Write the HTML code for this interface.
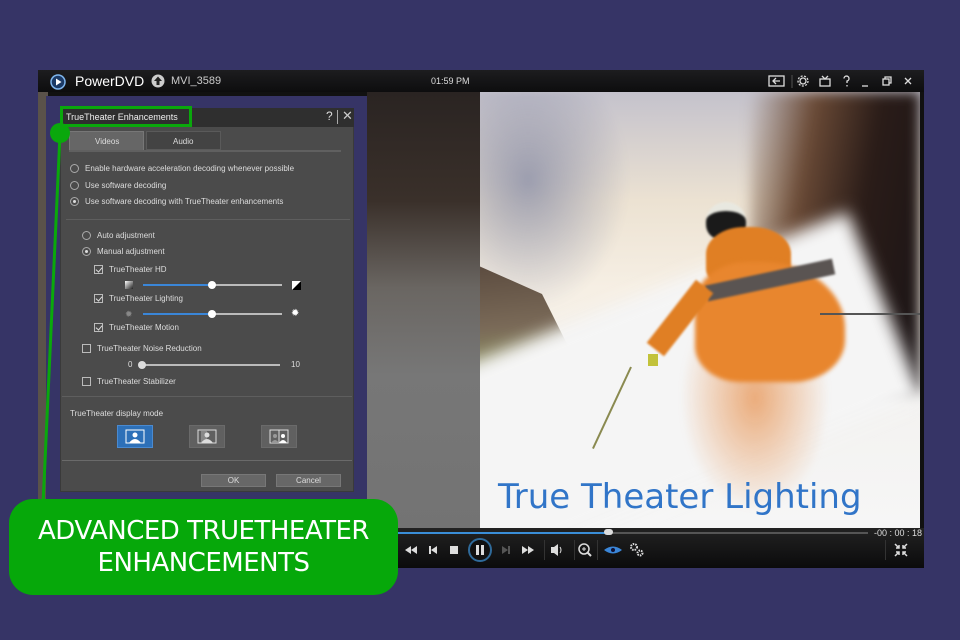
<!DOCTYPE html>
<html><head><meta charset="utf-8"><style>
*{margin:0;padding:0;box-sizing:border-box}
body{width:960px;height:640px;background:#363466;position:relative;overflow:hidden;font-family:"Liberation Sans",sans-serif}
.a{position:absolute}
.t{position:absolute;font-size:8px;color:#ddd;white-space:nowrap;line-height:10px}
.rad{position:absolute;width:9px;height:9px;border:1px solid #aaa;border-radius:50%}
.rad.on::after{content:"";position:absolute;left:2px;top:2px;width:3px;height:3px;border-radius:50%;background:#ddd}
.chk{position:absolute;width:9px;height:9px;border:1px solid #bbb}
.chk.on::after{content:"";position:absolute;left:2px;top:0px;width:3px;height:5px;border:solid #ddd;border-width:0 1px 1px 0;transform:rotate(40deg)}
.trk{position:absolute;height:2px;background:#bbb}
.knob{position:absolute;width:8px;height:8px;border-radius:50%;background:#fff}
.mb{position:absolute;top:425px;width:36px;height:23px;background:#606060;border:1px solid #6a6a6a}
.btn{position:absolute;top:474px;height:13px;background:#676767;border:1px solid #777;color:#ddd;font-size:8px;text-align:center;line-height:11px}
.bl{filter:blur(3px)}
</style></head><body>
<!-- player -->
<div class="a" style="left:38px;top:70px;width:886px;height:498px;background:#111"></div>
<div class="a" style="left:38px;top:70px;width:886px;height:22px;background:linear-gradient(#1d1d1f,#0d0d0e)"></div>
<svg class="a" style="left:50px;top:74px" width="16" height="16"><circle cx="8" cy="8" r="7" fill="#1b3a66" stroke="#7fb6ee" stroke-width="1.5"/><path d="M6 4.5L11.5 8 6 11.5z" fill="#fff"/></svg>
<div class="a" style="left:75px;top:73px;color:#fff;font-size:14px">PowerDVD</div>
<svg class="a" style="left:151px;top:74px" width="14" height="14"><circle cx="7" cy="7" r="6.5" fill="#ccc"/><path d="M7 2.5L11 7H8.5v4h-3V7H3z" fill="#222"/></svg>
<div class="a" style="left:171px;top:75px;color:#ccc;font-size:11px">MVI_3589</div>
<div class="a" style="left:431px;top:76px;color:#ddd;font-size:9px">01:59 PM</div>
<svg class="a" style="left:768px;top:75px" width="150" height="13" fill="none" stroke="#ddd" stroke-width="1.3">
<rect x="1" y="1" width="15" height="10"/><path d="M12 6H5M8 3L5 6 8 9"/>
<line x1="24" y1="0" x2="24" y2="13" stroke="#444"/>
<circle cx="35" cy="6" r="3"/><circle cx="35" cy="6" r="5" stroke-dasharray="2 1.5"/>
<rect x="52" y="4" width="10" height="7"/><path d="M54 1l3 3 3-3"/>
<path d="M76 3.5a2.5 2.5 0 1 1 3 2.5v2M79 10v1.5"/>
<path d="M94 11h6"/>
<rect x="115" y="4" width="6" height="6"/><path d="M117 4V2h6v6h-2"/>
<path d="M137 3l6 6M143 3l-6 6"/>
</svg>
<!-- video -->
<div class="a" style="left:367px;top:92px;width:113px;height:436px;background:linear-gradient(180deg,#2a2422 0%,#3a302a 25%,#6a6662 45%,#777 65%,#737373 100%)"></div>
<div class="a" style="left:38px;top:92px;width:10px;height:436px;background:#5a524a"></div>
<div class="a" style="left:480px;top:92px;width:440px;height:436px;overflow:hidden;background:linear-gradient(180deg,#c4c2cc 0%,#ece2d2 25%,#f6efe4 45%,#f3f2f0 70%,#f6f6f6 100%)">
  <div class="a bl" style="left:-20px;top:0;width:170px;height:220px;background:radial-gradient(ellipse at 40% 40%,#8a8ea6,rgba(200,200,210,0) 70%);opacity:.8"></div>
  <div class="a" style="left:270px;top:0;width:170px;height:300px;background:linear-gradient(100deg,rgba(120,90,70,0) 0%,#6a4a36 30%,#2a1c18 60%,#1a1416 100%);filter:blur(6px)"></div>
  <div class="a bl" style="left:-10px;top:170px;width:120px;height:160px;background:linear-gradient(175deg,#5a4a3e 0%,#7a6a58 40%,#9aa66a 75%,rgba(240,240,235,0) 100%);clip-path:polygon(0 0,60% 20%,100% 80%,0 100%)"></div>
  <div class="a" style="left:-40px;top:300px;width:520px;height:200px;background:#f5f5f5;transform:rotate(-22deg);transform-origin:0 100%;filter:blur(8px)"></div>
  <div class="a bl" style="left:200px;top:230px;width:150px;height:190px;background:radial-gradient(ellipse at 50% 40%,rgba(230,140,70,.7),rgba(245,245,245,0) 70%)"></div>
  <div class="a" style="left:226px;top:110px;width:40px;height:38px;border-radius:50% 50% 40% 40%;background:#1a1a1a;border-top:9px solid #e8e8e0;filter:blur(1px)"></div>
  <div class="a" style="left:226px;top:135px;width:85px;height:60px;background:#e07f24;border-radius:45% 45% 30% 30%;filter:blur(1px)"></div>
  <div class="a" style="left:215px;top:170px;width:150px;height:120px;background:#e8862e;border-radius:35% 55% 35% 30%;filter:blur(2px)"></div>
  <div class="a" style="left:225px;top:180px;width:130px;height:16px;background:#5a5452;transform:rotate(-12deg);filter:blur(1px)"></div>
  <div class="a" style="left:160px;top:215px;width:80px;height:22px;background:#e07f24;transform:rotate(-52deg);filter:blur(1px)"></div>
  <div class="a" style="left:168px;top:262px;width:10px;height:12px;background:#c2c23a"></div>
  <div class="a" style="left:150px;top:275px;width:2px;height:90px;background:#8a8a50;transform:rotate(25deg);transform-origin:top"></div>
  <div class="a" style="left:340px;top:221px;width:100px;height:2px;background:#555"></div>
</div>
<div class="a" style="left:498px;top:477px;color:#3175c8;font-size:34px;font-family:'DejaVu Sans',sans-serif;white-space:nowrap">True Theater Lighting</div>
<!-- controls -->
<div class="a" style="left:38px;top:528px;width:886px;height:40px;background:linear-gradient(#222,#0b0b0c)"></div>
<div class="a" style="left:398px;top:532px;width:210px;height:2px;background:#3a8ed8"></div>
<div class="a" style="left:608px;top:532px;width:260px;height:2px;background:#555"></div>
<div class="a" style="left:604px;top:529px;width:9px;height:6px;border-radius:3px;background:#ddd"></div>
<div class="a" style="left:874px;top:528px;color:#ddd;font-size:9px">-00 : 00 : 18</div>
<svg class="a" style="left:400px;top:537px" width="250" height="26" fill="#ddd">
<path d="M5 13l6-4v8zM11 13l6-4v8z"/>
<rect x="29" y="9" width="2" height="8"/><path d="M31 13l6-4v8z"/>
<rect x="50" y="9" width="8" height="8"/>
<circle cx="80" cy="13" r="11" fill="#111" stroke="#2f6a9a" stroke-width="2"/><rect x="76" y="8" width="3" height="10"/><rect x="81" y="8" width="3" height="10"/>
<path d="M102 9l6 4-6 4z" fill="#555"/><rect x="108" y="9" width="2" height="8" fill="#555"/>
<path d="M122 9l6 4-6 4zM128 9l6 4-6 4z"/>
<rect x="144" y="3" width="1" height="20" fill="#333"/>
<path d="M151 10h3l4-3v12l-4-3h-3z"/><path d="M160 10q2 3 0 6" stroke="#ddd" fill="none"/>
<rect x="174" y="3" width="1" height="20" fill="#333"/>
<circle cx="184" cy="12" r="5" fill="none" stroke="#ddd" stroke-width="1.5"/><path d="M187 15l4 4" stroke="#ddd" stroke-width="2"/><path d="M182 12h4M184 10v4" stroke="#ddd"/>
<rect x="197" y="3" width="1" height="20" fill="#333"/>
<path d="M204 13q9-7 18 0q-9 7-18 0z" fill="#3a86d8"/><circle cx="213" cy="13" r="2" fill="#113"/>
<circle cx="234" cy="10" r="3" fill="none" stroke="#ddd" stroke-width="2" stroke-dasharray="1.5 1"/><circle cx="240" cy="16" r="2.5" fill="none" stroke="#ddd" stroke-width="2" stroke-dasharray="1.5 1"/>
</svg>
<div class="a" style="left:885px;top:540px;width:1px;height:20px;background:#333"></div>
<svg class="a" style="left:894px;top:543px" width="14" height="14" stroke="#ddd" stroke-width="1.5" fill="none"><path d="M1 1l4 4M5 2v3H2M13 1l-4 4M9 2v3h3M1 13l4-4M5 12V9H2M13 13l-4-4M9 12V9h3"/></svg>
<!-- navy panel + dialog -->
<div class="a" style="left:46px;top:96px;width:321px;height:404px;background:#363466"></div>
<div class="a" style="left:60px;top:108px;width:294px;height:384px;background:#4b4b4b;border:1px solid #3a3a3a"></div>
<div class="a" style="left:60px;top:108px;width:294px;height:19px;background:#2f2f2f"></div>
<div class="t" style="left:66px;top:112px;font-size:9px;color:#eee">TrueTheater Enhancements</div>
<div class="t" style="left:326px;top:110px;font-size:12px;line-height:13px">?</div>
<div class="a" style="left:337px;top:110px;width:1px;height:14px;background:#aaa"></div>
<div class="t" style="left:342px;top:109px;font-size:13px;line-height:14px;color:#ccc">✕</div>
<div class="a" style="left:69px;top:131px;width:75px;height:20px;background:#666;border:1px solid #777;border-bottom:none"></div>
<div class="a" style="left:146px;top:131px;width:75px;height:19px;background:#434343;border:1px solid #5a5a5a"></div>
<div class="a" style="left:69px;top:150px;width:272px;height:2px;background:#606060"></div>
<div class="t" style="left:95px;top:137px">Videos</div>
<div class="t" style="left:173px;top:137px">Audio</div>
<div class="rad" style="left:70px;top:164px"></div><div class="t" style="left:85px;top:164px">Enable hardware acceleration decoding whenever possible</div>
<div class="rad" style="left:70px;top:181px"></div><div class="t" style="left:85px;top:181px">Use software decoding</div>
<div class="rad on" style="left:70px;top:197px"></div><div class="t" style="left:85px;top:197px">Use software decoding with TrueTheater enhancements</div>
<div class="a" style="left:66px;top:219px;width:284px;height:1px;background:#5e5e5e"></div>
<div class="rad" style="left:82px;top:231px"></div><div class="t" style="left:97px;top:231px">Auto adjustment</div>
<div class="rad on" style="left:82px;top:247px"></div><div class="t" style="left:97px;top:247px">Manual adjustment</div>
<div class="chk on" style="left:94px;top:265px"></div><div class="t" style="left:109px;top:265px">TrueTheater HD</div>
<div class="a" style="left:125px;top:281px;width:8px;height:8px;background:linear-gradient(135deg,#fff,#222)"></div>
<div class="trk" style="left:143px;top:284px;width:69px;background:#3a86d8"></div><div class="trk" style="left:212px;top:284px;width:70px"></div>
<div class="knob" style="left:208px;top:281px"></div>
<svg class="a" style="left:292px;top:281px" width="9" height="9"><rect width="9" height="9" fill="#fff"/><path d="M9 0V9H0z" fill="#000"/></svg>
<div class="chk on" style="left:94px;top:294px"></div><div class="t" style="left:109px;top:294px">TrueTheater Lighting</div>
<div class="t" style="left:125px;top:309px;color:#888;font-size:9px">✹</div>
<div class="trk" style="left:143px;top:313px;width:69px;background:#3a86d8"></div><div class="trk" style="left:212px;top:313px;width:70px"></div>
<div class="knob" style="left:208px;top:310px"></div>
<div class="t" style="left:291px;top:309px;color:#fff;font-size:10px">✹</div>
<div class="chk on" style="left:94px;top:323px"></div><div class="t" style="left:109px;top:323px">TrueTheater Motion</div>
<div class="chk" style="left:82px;top:344px"></div><div class="t" style="left:97px;top:344px">TrueTheater Noise Reduction</div>
<div class="t" style="left:128px;top:360px">0</div>
<div class="trk" style="left:141px;top:364px;width:139px"></div><div class="knob" style="left:138px;top:361px;background:#ddd"></div>
<div class="t" style="left:291px;top:360px">10</div>
<div class="chk" style="left:82px;top:377px"></div><div class="t" style="left:97px;top:377px">TrueTheater Stabilizer</div>
<div class="a" style="left:62px;top:396px;width:290px;height:1px;background:#5e5e5e"></div>
<div class="t" style="left:70px;top:409px">TrueTheater display mode</div>
<div class="mb" style="left:117px;background:#2d70b8;border-color:#4a8ad0"></div>
<div class="mb" style="left:189px"></div>
<div class="mb" style="left:261px"></div>
<svg class="a" style="left:117px;top:425px" width="180" height="23" fill="#fff">
<rect x="9" y="5" width="18" height="13" fill="none" stroke="#fff"/><circle cx="18" cy="10" r="2.5"/><path d="M12 18q6-8 12 0z"/>
<rect x="81" y="5" width="18" height="13" fill="none" stroke="#ddd"/><path d="M84 6h6v12h-6z" fill="#888"/><circle cx="90" cy="10" r="2.5" fill="#ddd"/><path d="M84 18q6-8 12 0z" fill="#ddd"/>
<rect x="153" y="5" width="18" height="13" fill="none" stroke="#ddd"/><line x1="162" y1="5" x2="162" y2="18" stroke="#ddd"/><circle cx="158" cy="11" r="2" fill="#999"/><path d="M154 18q4-6 8 0z" fill="#999"/><circle cx="166" cy="11" r="2"/><path d="M162 18q4-6 8 0z"/>
</svg>
<div class="a" style="left:62px;top:460px;width:290px;height:1px;background:#6a6a6a"></div>
<div class="btn" style="left:201px;width:65px">OK</div>
<div class="btn" style="left:276px;width:65px">Cancel</div>
<!-- green annotation -->
<div class="a" style="left:60px;top:106px;width:132px;height:21px;border:3px solid #0aa80c"></div>
<svg class="a" style="left:0;top:0" width="120" height="520"><line x1="60" y1="134" x2="43" y2="505" stroke="#0aa80c" stroke-width="3"/><circle cx="60" cy="133" r="10" fill="#0aa80c"/></svg>
<div class="a" style="left:9px;top:499px;width:389px;height:96px;background:#06a80a;border-radius:24px;color:#fff;font-size:26px;line-height:32px;text-align:center;padding-top:16px;font-family:'DejaVu Sans',sans-serif;letter-spacing:-0.5px">ADVANCED TRUETHEATER<br>ENHANCEMENTS</div>
</body></html>
